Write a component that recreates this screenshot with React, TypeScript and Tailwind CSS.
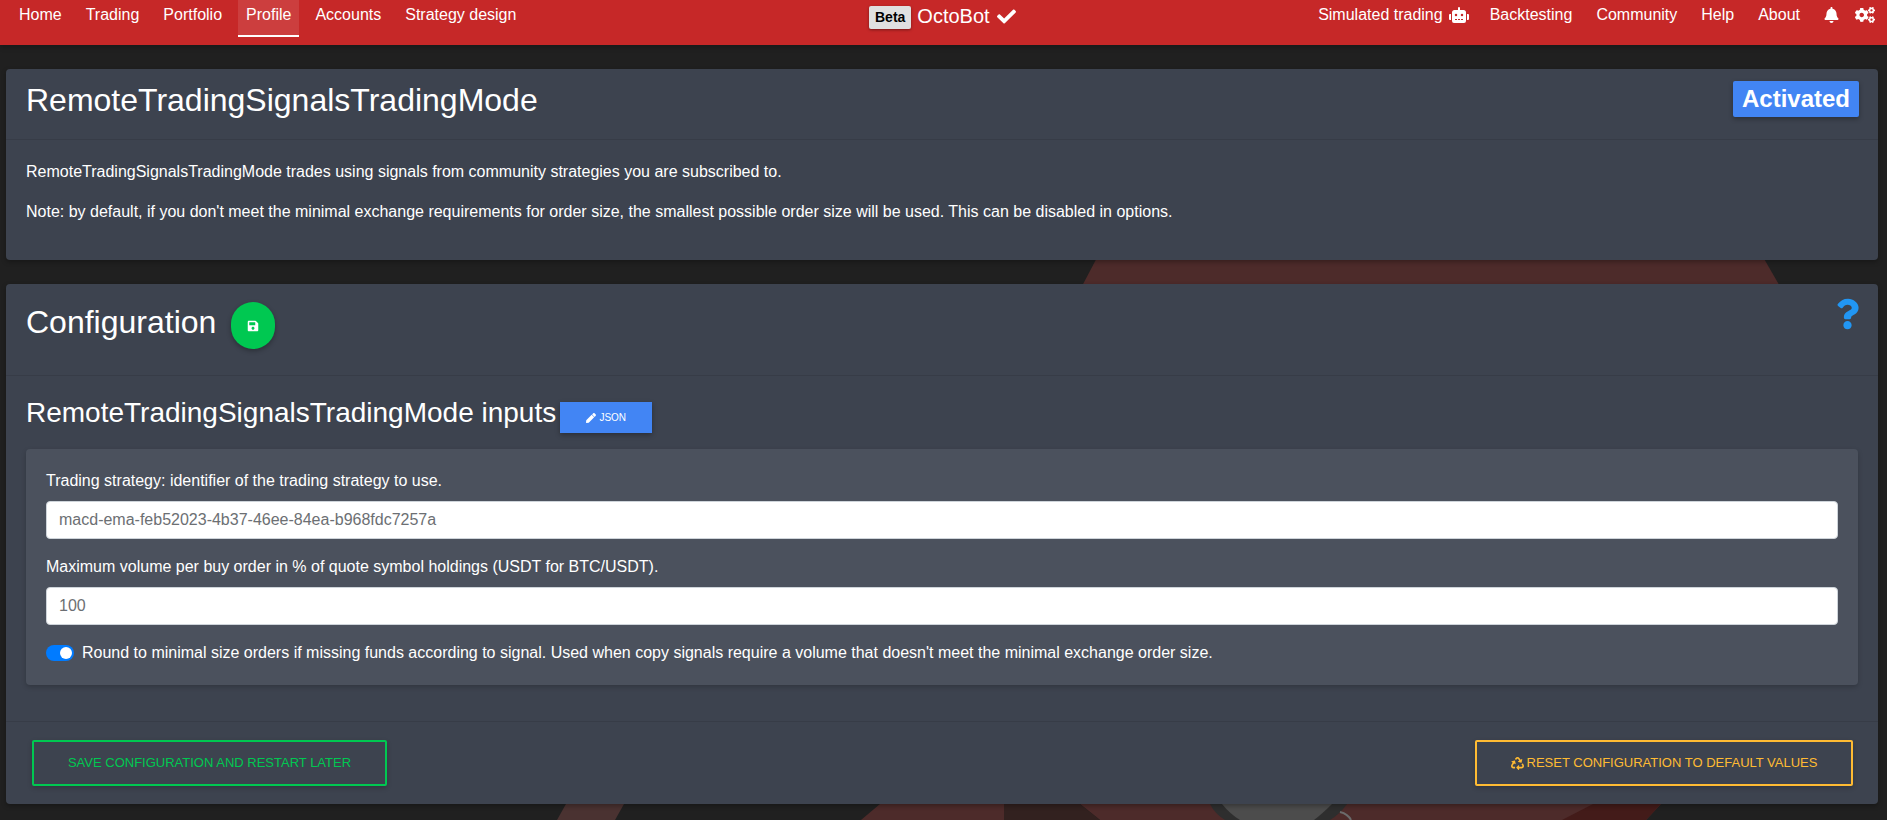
import { FaBell, FaCheck, FaCogs, FaPen, FaQuestion, FaRecycle, FaRobot, FaSave } from "react-icons/fa";

const leftLinks = ["Home", "Trading", "Portfolio", "Profile", "Accounts", "Strategy design"];
const rightLinks = ["Backtesting", "Community", "Help", "About"];

function NavLink({ label, active }: { label: string; active?: boolean }) {
  return (
    <a className={`mx-1 flex h-[37px] items-start px-2 pt-[3px] leading-6 text-white ${active ? "border-b-2 border-white bg-white/10" : ""}`}>{label}</a>
  );
}

function BackgroundLogo() {
  return (
    <svg className="absolute inset-0 h-full w-full" viewBox="0 0 1887 820" aria-hidden="true">
      <path d="M1101 250 L1759 250 L1782 290 L1080 290 Z" fill="#4d2b2a" />
      <path d="M1080 804 L1661 804 L1646 820 L1100 820 Z" fill="#4d2b2a" />
      <path d="M1593 804 L1661 804 L1646 820 L1562 820 Z" fill="#431b19" />
      <path d="M880 804 L1004 804 L1004 820 L861 820 Z" fill="#4d2b2a" />
      <path d="M1004 804 L1080 804 L1100 820 L1004 820 Z" fill="#32211f" />
      <path d="M566 804 L624 804 L615 820 L557 820 Z" fill="#4a3231" />
      <path d="M1210 804 L1347 804 Q1340 814 1330 820 L1225 820 Q1215 814 1210 804 Z" fill="#2e2e2e" />
      <path d="M1222 804 L1332 804 Q1322 814 1314 820 L1240 820 Q1230 814 1222 804 Z" fill="#4c4c4c" />
      <path d="M1340 812 Q1348 814 1351 820" fill="none" stroke="#6b6b6b" strokeWidth="2" />
    </svg>
  );
}

function Card({ children, className }: { children: React.ReactNode; className?: string }) {
  return <section className={`rounded-[4px] bg-[#3d434f] shadow-[0_2px_5px_rgba(0,0,0,0.3)] ${className ?? ""}`}>{children}</section>;
}

export default function App() {
  return (
    <div className="relative h-[820px] overflow-hidden bg-[#202020] font-['Liberation_Sans',Arial,sans-serif] text-base text-white">
      <BackgroundLogo />
      <nav className="relative flex h-[45px] justify-between bg-[#c62828] pl-[7px] pr-[12px] shadow-[0_2px_5px_rgba(0,0,0,0.25)]">
        <div className="flex">
          {leftLinks.map((l) => <NavLink key={l} label={l} active={l === "Profile"} />)}
        </div>
        <div className="absolute left-[869px] top-[6px] flex items-start">
          <span className="rounded-[2px] bg-[#e0e0e0] px-[6px] py-[2px] text-[14px] leading-[19px] font-bold text-black shadow-[0_1px_3px_rgba(0,0,0,0.4)]">Beta</span>
          <span className="ml-[6px] text-[20px] leading-[20px]">OctoBot</span>
          <FaCheck className="ml-[5px] mt-[1px] h-[19px] w-[23px]" />
        </div>
        <div className="flex">
          <a className="flex h-[37px] items-start px-2 pt-[3px] leading-6">
            Simulated trading
            <FaRobot className="ml-[5px] mt-[4px] h-[16px] w-[22px]" />
          </a>
          <div className="flex">
            {rightLinks.map((l) => <NavLink key={l} label={l} />)}
          </div>
          <FaBell className="ml-[12px] mt-[7px] h-[16px] w-[15px]" />
          <FaCogs className="ml-[16px] mt-[7px] h-[16px] w-[20px]" />
        </div>
      </nav>

      <main className="relative px-[6px] pr-[9px] pt-[24px]">
        <Card className="h-[191px]">
          <header className="flex h-[71px] items-start justify-between border-b border-[#373c47] pl-5 pr-[19px] pt-[12px]">
            <h1 className="text-[32px] leading-[38px]">RemoteTradingSignalsTradingMode</h1>
            <span className="rounded-[2px] bg-[#4285f4] px-[9px] py-[2px] text-[24px] leading-[32px] font-bold shadow-[0_2px_5px_rgba(0,0,0,0.3)]">Activated</span>
          </header>
          <div className="space-y-4 px-5 pt-5">
            <p className="leading-6">RemoteTradingSignalsTradingMode trades using signals from community strategies you are subscribed to.</p>
            <p className="leading-6">Note: by default, if you don't meet the minimal exchange requirements for order size, the smallest possible order size will be used. This can be disabled in options.</p>
          </div>
        </Card>

        <Card className="mt-[24px] h-[520px]">
          <header className="flex h-[92px] items-start justify-between border-b border-[#373c47] pl-5 pr-[19px]">
            <div className="flex items-start pt-[18px]">
              <h2 className="mt-[1px] text-[32px] leading-[38px]">Configuration</h2>
              <button className="ml-[15px] flex h-[47px] w-[44px] items-center justify-center rounded-full bg-[#00c851] shadow-[0_2px_5px_rgba(0,0,0,0.3)]">
                <FaSave className="h-[12px] w-[12px]" />
              </button>
            </div>
            <FaQuestion className="mt-[14px] h-[32px] w-[23px] text-[#2196f3]" />
          </header>

          <div className="px-5 pt-[18px]">
            <div className="flex items-start">
              <h3 className="mt-[2px] text-[28px] leading-[34px]">RemoteTradingSignalsTradingMode inputs</h3>
              <button className="ml-[4px] mt-[8px] flex h-[31px] w-[92px] items-center justify-center bg-[#4285f4] text-[10px] shadow-[0_2px_5px_rgba(0,0,0,0.3)]">
                <FaPen className="mr-[3px] h-[10px] w-[10px]" />
                JSON
              </button>
            </div>

            <div className="mt-[16px] h-[236px] rounded-[4px] bg-[#4b515d] px-5 pt-[20px] shadow-[0_2px_5px_rgba(0,0,0,0.2)]">
              <label className="block leading-6">Trading strategy: identifier of the trading strategy to use.</label>
              <input readOnly value="macd-ema-feb52023-4b37-46ee-84ea-b968fdc7257a" className="mt-[8px] block h-[38px] w-full rounded-[4px] border border-[#ced4da] bg-white px-3 text-[#6c6f73]" />
              <label className="mt-[16px] block leading-6">Maximum volume per buy order in % of quote symbol holdings (USDT for BTC/USDT).</label>
              <input readOnly value="100" className="mt-[8px] block h-[38px] w-full rounded-[4px] border border-[#ced4da] bg-white px-3 text-[#6c6f73]" />
              <div className="mt-[16px] flex items-center">
                <span className="flex h-[16px] w-[28px] items-center justify-end rounded-full bg-[#007bff] pr-[2px]">
                  <span className="h-[12px] w-[12px] rounded-full bg-white" />
                </span>
                <span className="ml-[8px] leading-6">Round to minimal size orders if missing funds according to signal. Used when copy signals require a volume that doesn't meet the minimal exchange order size.</span>
              </div>
            </div>
          </div>

          <footer className="mt-[36px] flex justify-between border-t border-[#373c47] pl-[26px] pr-[25px] pt-[18px]">
            <button className="h-[46px] w-[355px] rounded-[2px] border-2 border-[#00c851] text-[13px] text-[#00c851] shadow-[0_2px_5px_rgba(0,0,0,0.2)]">SAVE CONFIGURATION AND RESTART LATER</button>
            <button className="flex h-[46px] w-[378px] items-center justify-center rounded-[2px] border-2 border-[#ffbb33] text-[13px] text-[#ffbb33] shadow-[0_2px_5px_rgba(0,0,0,0.2)]">
              <FaRecycle className="mr-[3px] h-[13px] w-[13px]" />
              RESET CONFIGURATION TO DEFAULT VALUES
            </button>
          </footer>
        </Card>
      </main>
    </div>
  );
}
